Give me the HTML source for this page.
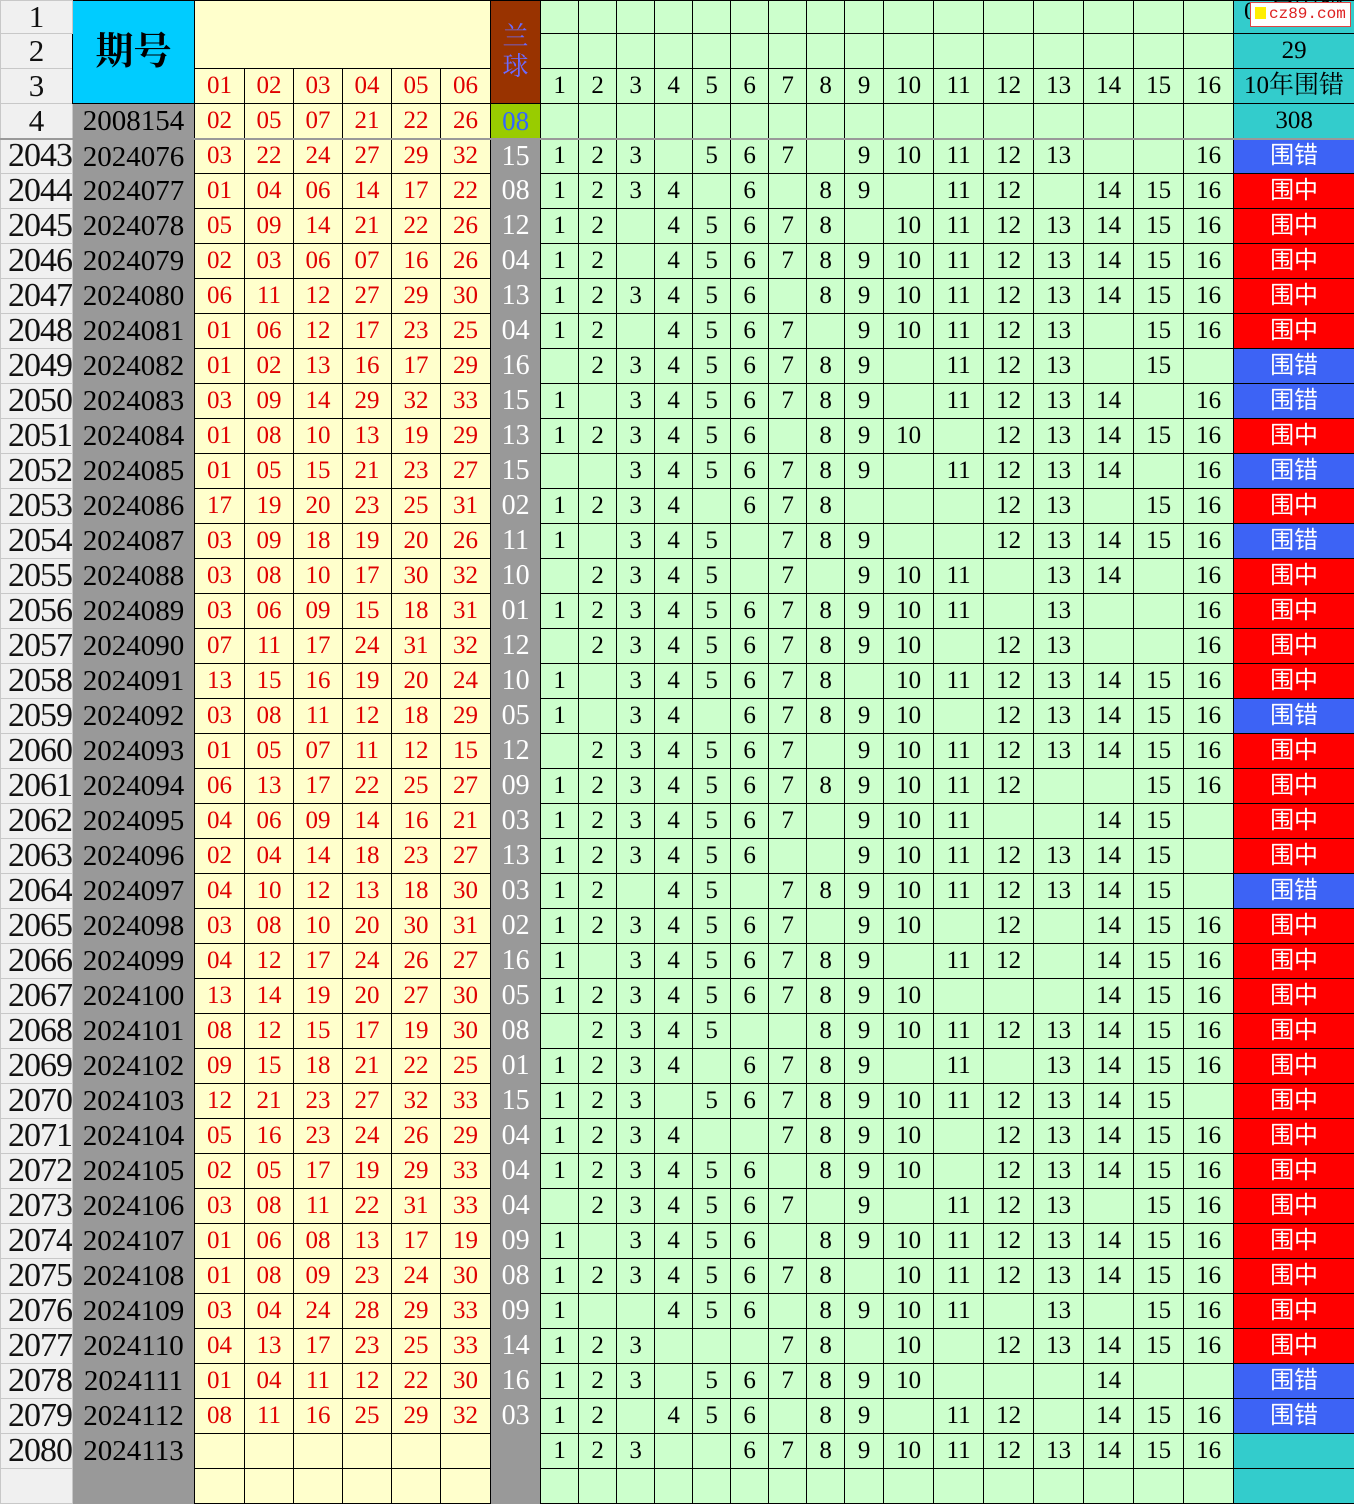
<!DOCTYPE html>
<html><head><meta charset="utf-8">
<style>
html,body{margin:0;padding:0;background:#fff;}
body{width:1354px;height:1473px;overflow:hidden;position:relative;font-family:"Liberation Serif","Noto Serif CJK SC",serif;}
table{border-collapse:collapse;table-layout:fixed;width:1354px;}
td{border:1px solid #000;padding:0;text-align:center;vertical-align:middle;white-space:nowrap;overflow:hidden;font-size:25px;line-height:30px;background:#ccffcc;color:#000;}
tr{height:35px;}
tr.h1{height:33px;}
td.n{background:#f0f0f0;border:1px solid #c8c8c8;font-size:31px;color:#111;text-align:center;}
tbody.d td.n{text-align:right;padding-right:0;font-size:34px;letter-spacing:-1px;}
td.q{background:#00ccff;font-size:38px;font-weight:bold;}
td.y{background:#ffffcc;color:#e00000;}
td.lq{background:#993300;color:#6b6bff;font-size:26px;line-height:30px;white-space:normal;}
td.t{background:#33cccc;font-size:25px;}
td.gid{background:#999;border-top:none;border-bottom:none;font-size:29px;}
td.b8{background:#99cc00;color:#3366ff;font-size:27px;}
tbody.d td:nth-child(2){background:#999;border-top:none;border-bottom:none;font-size:29px;}
tbody.d td:nth-child(n+3):nth-child(-n+8){background:#ffffcc;color:#e00000;}
tbody.d td:nth-child(9){background:#999;color:#fff;border-top:none;border-bottom:none;font-size:28px;}
td.c{background:#3d63f5;color:#fff;font-family:"Liberation Sans","Noto Sans CJK SC",sans-serif;font-size:24px;}
td.z{background:#ff0000;color:#fff;font-family:"Liberation Sans","Noto Sans CJK SC",sans-serif;font-size:24px;}
tr.sep td{border-bottom:2px solid #999;}
.wm{position:absolute;left:1250px;top:2px;width:101px;height:25px;background:#fff;border:1px solid #d44;box-sizing:border-box;font-family:"Liberation Mono",monospace;color:#d22;font-size:16px;line-height:23px;white-space:nowrap;overflow:hidden;}
.wm i{display:inline-block;width:11px;height:12px;background:#ffee00;margin:0 3px 0 4px;vertical-align:-1px;}
</style></head><body>
<table>
<colgroup><col style="width:72px"><col style="width:122px"><col style="width:50px"><col style="width:49px"><col style="width:49px"><col style="width:49px"><col style="width:49px"><col style="width:50px"><col style="width:50px"><col style="width:38px"><col style="width:38px"><col style="width:38px"><col style="width:38px"><col style="width:38px"><col style="width:38px"><col style="width:38px"><col style="width:38px"><col style="width:39px"><col style="width:50px"><col style="width:50px"><col style="width:50px"><col style="width:50px"><col style="width:50px"><col style="width:50px"><col style="width:50px"><col style="width:121px"></colgroup>
<tbody>
<tr class="h1"><td class="n">1</td><td class="q" rowspan="3">期号</td><td class="y" colspan="6" rowspan="2"></td><td class="lq" rowspan="3">兰<br>球</td><td></td><td></td><td></td><td></td><td></td><td></td><td></td><td></td><td></td><td></td><td></td><td></td><td></td><td></td><td></td><td></td><td class="t" style="vertical-align:top;line-height:22px">09年围错</td></tr>
<tr><td class="n">2</td><td></td><td></td><td></td><td></td><td></td><td></td><td></td><td></td><td></td><td></td><td></td><td></td><td></td><td></td><td></td><td></td><td class="t">29</td></tr>
<tr><td class="n">3</td><td class="y">01</td><td class="y">02</td><td class="y">03</td><td class="y">04</td><td class="y">05</td><td class="y">06</td><td>1</td><td>2</td><td>3</td><td>4</td><td>5</td><td>6</td><td>7</td><td>8</td><td>9</td><td>10</td><td>11</td><td>12</td><td>13</td><td>14</td><td>15</td><td>16</td><td class="t">10年围错</td></tr>
<tr class="sep"><td class="n">4</td><td class="gid">2008154</td><td class="y">02</td><td class="y">05</td><td class="y">07</td><td class="y">21</td><td class="y">22</td><td class="y">26</td><td class="b8">08</td><td></td><td></td><td></td><td></td><td></td><td></td><td></td><td></td><td></td><td></td><td></td><td></td><td></td><td></td><td></td><td></td><td class="t">308</td></tr>
</tbody>
<tbody class="d">
<tr><td class="n">2043</td><td>2024076</td><td>03</td><td>22</td><td>24</td><td>27</td><td>29</td><td>32</td><td>15</td><td>1</td><td>2</td><td>3</td><td></td><td>5</td><td>6</td><td>7</td><td></td><td>9</td><td>10</td><td>11</td><td>12</td><td>13</td><td></td><td></td><td>16</td><td class="c">围错</td></tr>
<tr><td class="n">2044</td><td>2024077</td><td>01</td><td>04</td><td>06</td><td>14</td><td>17</td><td>22</td><td>08</td><td>1</td><td>2</td><td>3</td><td>4</td><td></td><td>6</td><td></td><td>8</td><td>9</td><td></td><td>11</td><td>12</td><td></td><td>14</td><td>15</td><td>16</td><td class="z">围中</td></tr>
<tr><td class="n">2045</td><td>2024078</td><td>05</td><td>09</td><td>14</td><td>21</td><td>22</td><td>26</td><td>12</td><td>1</td><td>2</td><td></td><td>4</td><td>5</td><td>6</td><td>7</td><td>8</td><td></td><td>10</td><td>11</td><td>12</td><td>13</td><td>14</td><td>15</td><td>16</td><td class="z">围中</td></tr>
<tr><td class="n">2046</td><td>2024079</td><td>02</td><td>03</td><td>06</td><td>07</td><td>16</td><td>26</td><td>04</td><td>1</td><td>2</td><td></td><td>4</td><td>5</td><td>6</td><td>7</td><td>8</td><td>9</td><td>10</td><td>11</td><td>12</td><td>13</td><td>14</td><td>15</td><td>16</td><td class="z">围中</td></tr>
<tr><td class="n">2047</td><td>2024080</td><td>06</td><td>11</td><td>12</td><td>27</td><td>29</td><td>30</td><td>13</td><td>1</td><td>2</td><td>3</td><td>4</td><td>5</td><td>6</td><td></td><td>8</td><td>9</td><td>10</td><td>11</td><td>12</td><td>13</td><td>14</td><td>15</td><td>16</td><td class="z">围中</td></tr>
<tr><td class="n">2048</td><td>2024081</td><td>01</td><td>06</td><td>12</td><td>17</td><td>23</td><td>25</td><td>04</td><td>1</td><td>2</td><td></td><td>4</td><td>5</td><td>6</td><td>7</td><td></td><td>9</td><td>10</td><td>11</td><td>12</td><td>13</td><td></td><td>15</td><td>16</td><td class="z">围中</td></tr>
<tr><td class="n">2049</td><td>2024082</td><td>01</td><td>02</td><td>13</td><td>16</td><td>17</td><td>29</td><td>16</td><td></td><td>2</td><td>3</td><td>4</td><td>5</td><td>6</td><td>7</td><td>8</td><td>9</td><td></td><td>11</td><td>12</td><td>13</td><td></td><td>15</td><td></td><td class="c">围错</td></tr>
<tr><td class="n">2050</td><td>2024083</td><td>03</td><td>09</td><td>14</td><td>29</td><td>32</td><td>33</td><td>15</td><td>1</td><td></td><td>3</td><td>4</td><td>5</td><td>6</td><td>7</td><td>8</td><td>9</td><td></td><td>11</td><td>12</td><td>13</td><td>14</td><td></td><td>16</td><td class="c">围错</td></tr>
<tr><td class="n">2051</td><td>2024084</td><td>01</td><td>08</td><td>10</td><td>13</td><td>19</td><td>29</td><td>13</td><td>1</td><td>2</td><td>3</td><td>4</td><td>5</td><td>6</td><td></td><td>8</td><td>9</td><td>10</td><td></td><td>12</td><td>13</td><td>14</td><td>15</td><td>16</td><td class="z">围中</td></tr>
<tr><td class="n">2052</td><td>2024085</td><td>01</td><td>05</td><td>15</td><td>21</td><td>23</td><td>27</td><td>15</td><td></td><td></td><td>3</td><td>4</td><td>5</td><td>6</td><td>7</td><td>8</td><td>9</td><td></td><td>11</td><td>12</td><td>13</td><td>14</td><td></td><td>16</td><td class="c">围错</td></tr>
<tr><td class="n">2053</td><td>2024086</td><td>17</td><td>19</td><td>20</td><td>23</td><td>25</td><td>31</td><td>02</td><td>1</td><td>2</td><td>3</td><td>4</td><td></td><td>6</td><td>7</td><td>8</td><td></td><td></td><td></td><td>12</td><td>13</td><td></td><td>15</td><td>16</td><td class="z">围中</td></tr>
<tr><td class="n">2054</td><td>2024087</td><td>03</td><td>09</td><td>18</td><td>19</td><td>20</td><td>26</td><td>11</td><td>1</td><td></td><td>3</td><td>4</td><td>5</td><td></td><td>7</td><td>8</td><td>9</td><td></td><td></td><td>12</td><td>13</td><td>14</td><td>15</td><td>16</td><td class="c">围错</td></tr>
<tr><td class="n">2055</td><td>2024088</td><td>03</td><td>08</td><td>10</td><td>17</td><td>30</td><td>32</td><td>10</td><td></td><td>2</td><td>3</td><td>4</td><td>5</td><td></td><td>7</td><td></td><td>9</td><td>10</td><td>11</td><td></td><td>13</td><td>14</td><td></td><td>16</td><td class="z">围中</td></tr>
<tr><td class="n">2056</td><td>2024089</td><td>03</td><td>06</td><td>09</td><td>15</td><td>18</td><td>31</td><td>01</td><td>1</td><td>2</td><td>3</td><td>4</td><td>5</td><td>6</td><td>7</td><td>8</td><td>9</td><td>10</td><td>11</td><td></td><td>13</td><td></td><td></td><td>16</td><td class="z">围中</td></tr>
<tr><td class="n">2057</td><td>2024090</td><td>07</td><td>11</td><td>17</td><td>24</td><td>31</td><td>32</td><td>12</td><td></td><td>2</td><td>3</td><td>4</td><td>5</td><td>6</td><td>7</td><td>8</td><td>9</td><td>10</td><td></td><td>12</td><td>13</td><td></td><td></td><td>16</td><td class="z">围中</td></tr>
<tr><td class="n">2058</td><td>2024091</td><td>13</td><td>15</td><td>16</td><td>19</td><td>20</td><td>24</td><td>10</td><td>1</td><td></td><td>3</td><td>4</td><td>5</td><td>6</td><td>7</td><td>8</td><td></td><td>10</td><td>11</td><td>12</td><td>13</td><td>14</td><td>15</td><td>16</td><td class="z">围中</td></tr>
<tr><td class="n">2059</td><td>2024092</td><td>03</td><td>08</td><td>11</td><td>12</td><td>18</td><td>29</td><td>05</td><td>1</td><td></td><td>3</td><td>4</td><td></td><td>6</td><td>7</td><td>8</td><td>9</td><td>10</td><td></td><td>12</td><td>13</td><td>14</td><td>15</td><td>16</td><td class="c">围错</td></tr>
<tr><td class="n">2060</td><td>2024093</td><td>01</td><td>05</td><td>07</td><td>11</td><td>12</td><td>15</td><td>12</td><td></td><td>2</td><td>3</td><td>4</td><td>5</td><td>6</td><td>7</td><td></td><td>9</td><td>10</td><td>11</td><td>12</td><td>13</td><td>14</td><td>15</td><td>16</td><td class="z">围中</td></tr>
<tr><td class="n">2061</td><td>2024094</td><td>06</td><td>13</td><td>17</td><td>22</td><td>25</td><td>27</td><td>09</td><td>1</td><td>2</td><td>3</td><td>4</td><td>5</td><td>6</td><td>7</td><td>8</td><td>9</td><td>10</td><td>11</td><td>12</td><td></td><td></td><td>15</td><td>16</td><td class="z">围中</td></tr>
<tr><td class="n">2062</td><td>2024095</td><td>04</td><td>06</td><td>09</td><td>14</td><td>16</td><td>21</td><td>03</td><td>1</td><td>2</td><td>3</td><td>4</td><td>5</td><td>6</td><td>7</td><td></td><td>9</td><td>10</td><td>11</td><td></td><td></td><td>14</td><td>15</td><td></td><td class="z">围中</td></tr>
<tr><td class="n">2063</td><td>2024096</td><td>02</td><td>04</td><td>14</td><td>18</td><td>23</td><td>27</td><td>13</td><td>1</td><td>2</td><td>3</td><td>4</td><td>5</td><td>6</td><td></td><td></td><td>9</td><td>10</td><td>11</td><td>12</td><td>13</td><td>14</td><td>15</td><td></td><td class="z">围中</td></tr>
<tr><td class="n">2064</td><td>2024097</td><td>04</td><td>10</td><td>12</td><td>13</td><td>18</td><td>30</td><td>03</td><td>1</td><td>2</td><td></td><td>4</td><td>5</td><td></td><td>7</td><td>8</td><td>9</td><td>10</td><td>11</td><td>12</td><td>13</td><td>14</td><td>15</td><td></td><td class="c">围错</td></tr>
<tr><td class="n">2065</td><td>2024098</td><td>03</td><td>08</td><td>10</td><td>20</td><td>30</td><td>31</td><td>02</td><td>1</td><td>2</td><td>3</td><td>4</td><td>5</td><td>6</td><td>7</td><td></td><td>9</td><td>10</td><td></td><td>12</td><td></td><td>14</td><td>15</td><td>16</td><td class="z">围中</td></tr>
<tr><td class="n">2066</td><td>2024099</td><td>04</td><td>12</td><td>17</td><td>24</td><td>26</td><td>27</td><td>16</td><td>1</td><td></td><td>3</td><td>4</td><td>5</td><td>6</td><td>7</td><td>8</td><td>9</td><td></td><td>11</td><td>12</td><td></td><td>14</td><td>15</td><td>16</td><td class="z">围中</td></tr>
<tr><td class="n">2067</td><td>2024100</td><td>13</td><td>14</td><td>19</td><td>20</td><td>27</td><td>30</td><td>05</td><td>1</td><td>2</td><td>3</td><td>4</td><td>5</td><td>6</td><td>7</td><td>8</td><td>9</td><td>10</td><td></td><td></td><td></td><td>14</td><td>15</td><td>16</td><td class="z">围中</td></tr>
<tr><td class="n">2068</td><td>2024101</td><td>08</td><td>12</td><td>15</td><td>17</td><td>19</td><td>30</td><td>08</td><td></td><td>2</td><td>3</td><td>4</td><td>5</td><td></td><td></td><td>8</td><td>9</td><td>10</td><td>11</td><td>12</td><td>13</td><td>14</td><td>15</td><td>16</td><td class="z">围中</td></tr>
<tr><td class="n">2069</td><td>2024102</td><td>09</td><td>15</td><td>18</td><td>21</td><td>22</td><td>25</td><td>01</td><td>1</td><td>2</td><td>3</td><td>4</td><td></td><td>6</td><td>7</td><td>8</td><td>9</td><td></td><td>11</td><td></td><td>13</td><td>14</td><td>15</td><td>16</td><td class="z">围中</td></tr>
<tr><td class="n">2070</td><td>2024103</td><td>12</td><td>21</td><td>23</td><td>27</td><td>32</td><td>33</td><td>15</td><td>1</td><td>2</td><td>3</td><td></td><td>5</td><td>6</td><td>7</td><td>8</td><td>9</td><td>10</td><td>11</td><td>12</td><td>13</td><td>14</td><td>15</td><td></td><td class="z">围中</td></tr>
<tr><td class="n">2071</td><td>2024104</td><td>05</td><td>16</td><td>23</td><td>24</td><td>26</td><td>29</td><td>04</td><td>1</td><td>2</td><td>3</td><td>4</td><td></td><td></td><td>7</td><td>8</td><td>9</td><td>10</td><td></td><td>12</td><td>13</td><td>14</td><td>15</td><td>16</td><td class="z">围中</td></tr>
<tr><td class="n">2072</td><td>2024105</td><td>02</td><td>05</td><td>17</td><td>19</td><td>29</td><td>33</td><td>04</td><td>1</td><td>2</td><td>3</td><td>4</td><td>5</td><td>6</td><td></td><td>8</td><td>9</td><td>10</td><td></td><td>12</td><td>13</td><td>14</td><td>15</td><td>16</td><td class="z">围中</td></tr>
<tr><td class="n">2073</td><td>2024106</td><td>03</td><td>08</td><td>11</td><td>22</td><td>31</td><td>33</td><td>04</td><td></td><td>2</td><td>3</td><td>4</td><td>5</td><td>6</td><td>7</td><td></td><td>9</td><td></td><td>11</td><td>12</td><td>13</td><td></td><td>15</td><td>16</td><td class="z">围中</td></tr>
<tr><td class="n">2074</td><td>2024107</td><td>01</td><td>06</td><td>08</td><td>13</td><td>17</td><td>19</td><td>09</td><td>1</td><td></td><td>3</td><td>4</td><td>5</td><td>6</td><td></td><td>8</td><td>9</td><td>10</td><td>11</td><td>12</td><td>13</td><td>14</td><td>15</td><td>16</td><td class="z">围中</td></tr>
<tr><td class="n">2075</td><td>2024108</td><td>01</td><td>08</td><td>09</td><td>23</td><td>24</td><td>30</td><td>08</td><td>1</td><td>2</td><td>3</td><td>4</td><td>5</td><td>6</td><td>7</td><td>8</td><td></td><td>10</td><td>11</td><td>12</td><td>13</td><td>14</td><td>15</td><td>16</td><td class="z">围中</td></tr>
<tr><td class="n">2076</td><td>2024109</td><td>03</td><td>04</td><td>24</td><td>28</td><td>29</td><td>33</td><td>09</td><td>1</td><td></td><td></td><td>4</td><td>5</td><td>6</td><td></td><td>8</td><td>9</td><td>10</td><td>11</td><td></td><td>13</td><td></td><td>15</td><td>16</td><td class="z">围中</td></tr>
<tr><td class="n">2077</td><td>2024110</td><td>04</td><td>13</td><td>17</td><td>23</td><td>25</td><td>33</td><td>14</td><td>1</td><td>2</td><td>3</td><td></td><td></td><td></td><td>7</td><td>8</td><td></td><td>10</td><td></td><td>12</td><td>13</td><td>14</td><td>15</td><td>16</td><td class="z">围中</td></tr>
<tr><td class="n">2078</td><td>2024111</td><td>01</td><td>04</td><td>11</td><td>12</td><td>22</td><td>30</td><td>16</td><td>1</td><td>2</td><td>3</td><td></td><td>5</td><td>6</td><td>7</td><td>8</td><td>9</td><td>10</td><td></td><td></td><td></td><td>14</td><td></td><td></td><td class="c">围错</td></tr>
<tr><td class="n">2079</td><td>2024112</td><td>08</td><td>11</td><td>16</td><td>25</td><td>29</td><td>32</td><td>03</td><td>1</td><td>2</td><td></td><td>4</td><td>5</td><td>6</td><td></td><td>8</td><td>9</td><td></td><td>11</td><td>12</td><td></td><td>14</td><td>15</td><td>16</td><td class="c">围错</td></tr>
<tr><td class="n">2080</td><td>2024113</td><td></td><td></td><td></td><td></td><td></td><td></td><td></td><td>1</td><td>2</td><td>3</td><td></td><td></td><td>6</td><td>7</td><td>8</td><td>9</td><td>10</td><td>11</td><td>12</td><td>13</td><td>14</td><td>15</td><td>16</td><td class="t"></td></tr>
<tr><td class="n"></td><td></td><td></td><td></td><td></td><td></td><td></td><td></td><td></td><td></td><td></td><td></td><td></td><td></td><td></td><td></td><td></td><td></td><td></td><td></td><td></td><td></td><td></td><td></td><td></td><td class="t"></td></tr>
</tbody>
</table>
<div class="wm"><i></i>cz89.com</div>
</body></html>
